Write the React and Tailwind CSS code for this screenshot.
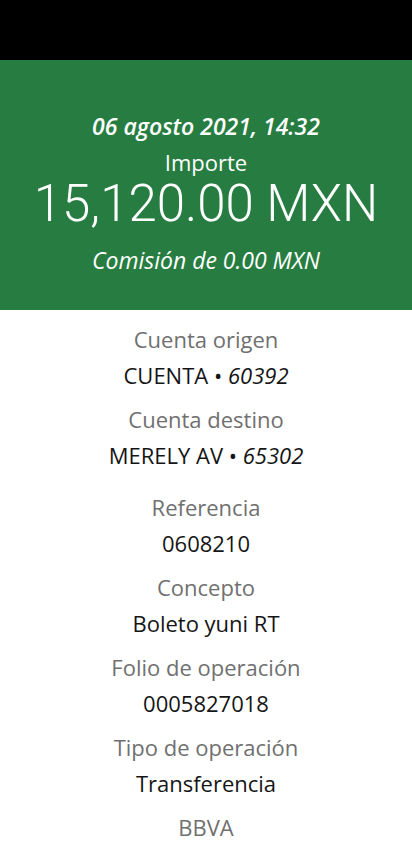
const rows = [
	{ label: 'Cuenta origen', value: <>CUENTA • <span className="italic">60392</span></> },
	{ label: 'Cuenta destino', value: <>MERELY AV • <span className="italic">65302</span></>, extra: true },
	{ label: 'Referencia', value: '0608210' },
	{ label: 'Concepto', value: 'Boleto yuni RT' },
	{ label: 'Folio de operación', value: '0005827018' },
	{ label: 'Tipo de operación', value: 'Transferencia' },
];

const App = () => {
	return (
		<div className="w-[412px] h-[850px] overflow-hidden bg-white font-['Open_Sans',sans-serif]">
			<div className="h-[60px] bg-black" />

			<div className="h-[250px] bg-[#277d41] text-white flex flex-col items-center pt-[48px]">
				<p className="text-[23px] leading-[36px] font-semibold italic">06 agosto 2021, 14:32</p>
				<p className="mt-[4px] text-[22px] leading-[28px]">Importe</p>
				<p className="font-['Roboto',sans-serif] text-[51px] leading-[56px] font-light">15,120.00 MXN</p>
				<p className="mt-[10px] text-[23px] leading-[36px] italic">Comisión de 0.00 MXN</p>
			</div>

			<div className="flex flex-col items-center pt-[11px] text-[22px] leading-[36px]">
				{rows.map(row => (
					<div key={row.label} className={row.extra ? 'flex flex-col items-center mb-[16px]' : 'flex flex-col items-center mb-[8px]'}>
						<p className="text-[#707070]">{row.label}</p>
						<p className="text-[#151515]">{row.value}</p>
					</div>
				))}
				<p className="text-[#707070]">BBVA</p>
			</div>
		</div>
	);
};

export default App;
